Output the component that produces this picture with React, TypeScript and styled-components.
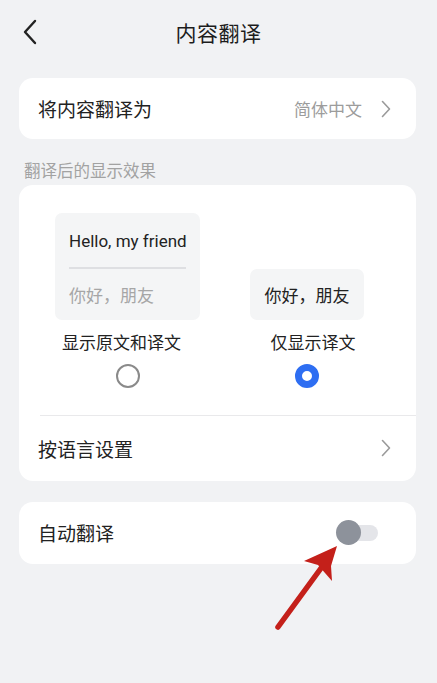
import React from 'react';
import styled, { createGlobalStyle } from 'styled-components';

const GlobalStyle = createGlobalStyle`
  html, body {
    margin: 0;
    padding: 0;
    background: #f1f2f4;
  }
  body {
    font-family: Roboto, "Noto Sans CJK SC", sans-serif;
    color: #222;
  }
`;

export default function App() {
  return (
    <Page>
      <GlobalStyle />
      <Header>
        <BackButton>
          <svg width="16" height="26" viewBox="0 0 16 26">
            <path d="M13 2 L3 13 L13 24" fill="none" stroke="#222" strokeWidth="2.4" strokeLinecap="round" strokeLinejoin="round" />
          </svg>
        </BackButton>
        <Title>内容翻译</Title>
      </Header>

      <Card top={14}>
        <Row height={61}>
          <RowLabel>将内容翻译为</RowLabel>
          <RowRight>
            <RowValue>简体中文</RowValue>
            <Chevron />
          </RowRight>
        </Row>
      </Card>

      <SectionLabel>翻译后的显示效果</SectionLabel>

      <Card top={0}>
        <Options>
          <Option>
            <DualPreview>
              <PreviewLine>Hello, my friend</PreviewLine>
              <PreviewDivider />
              <PreviewLine muted>你好，朋友</PreviewLine>
            </DualPreview>
            <OptionLabel shift={-6}>显示原文和译文</OptionLabel>
            <Radio />
          </Option>
          <Option>
            <SinglePreview>你好，朋友</SinglePreview>
            <OptionLabel shift={6}>仅显示译文</OptionLabel>
            <Radio checked />
          </Option>
        </Options>
        <Divider />
        <Row height={65}>
          <RowLabel>按语言设置</RowLabel>
          <RowRight>
            <Chevron />
          </RowRight>
        </Row>
      </Card>

      <Card top={21}>
        <Row height={62}>
          <RowLabel>自动翻译</RowLabel>
          <Toggle>
            <Knob />
          </Toggle>
        </Row>
      </Card>

      <Annotation width="437" height="683" viewBox="0 0 437 683">
        <line x1="278" y1="627" x2="327" y2="560" stroke="#c4201a" strokeWidth="5.5" strokeLinecap="round" />
        <polygon points="337,546 304,561 318,565 332,581 331,566" fill="#c4201a" />
      </Annotation>
    </Page>
  );
}

function Chevron() {
  return (
    <svg width="12" height="18" viewBox="0 0 12 18">
      <path d="M2.5 1.5 L9.5 9 L2.5 16.5" fill="none" stroke="#9a9a9a" strokeWidth="1.6" strokeLinecap="round" strokeLinejoin="round" />
    </svg>
  );
}

const Page = styled.div`
  position: relative;
  width: 437px;
  height: 683px;
  overflow: hidden;
  background: #f1f2f4;
`;

const Header = styled.div`
  position: relative;
  height: 64px;
  display: flex;
  align-items: center;
  justify-content: center;
`;

const BackButton = styled.div`
  position: absolute;
  left: 22px;
  top: 19px;
  display: flex;
`;

const Title = styled.div`
  font-size: 21px;
  color: #1c1c1c;
  letter-spacing: 0.5px;
`;

const Card = styled.div<{ top: number }>`
  margin: ${p => p.top}px 0 0 19px;
  width: 397px;
  background: #fff;
  border-radius: 14px;
  overflow: hidden;
`;

const Row = styled.div<{ height: number }>`
  height: ${p => p.height}px;
  display: flex;
  align-items: center;
  justify-content: space-between;
  padding: 0 24px 0 19px;
`;

const RowLabel = styled.div`
  font-size: 19px;
  color: #222;
`;

const RowRight = styled.div`
  display: flex;
  align-items: center;
  gap: 18px;
`;

const RowValue = styled.div`
  font-size: 17px;
  color: #9c9c9c;
`;

const SectionLabel = styled.div`
  padding: 22px 0 3px 24px;
  line-height: 21px;
  font-size: 16.5px;
  color: #a2a2a2;
`;

const Options = styled.div`
  display: flex;
  align-items: flex-end;
  padding: 28px 0 27px 36px;
  gap: 50px;
`;

const Option = styled.div`
  display: flex;
  flex-direction: column;
  align-items: center;
`;

const DualPreview = styled.div`
  width: 145px;
  box-sizing: border-box;
  padding: 14px 14px 10px;
  background: #f4f5f6;
  border-radius: 7px;
`;

const PreviewLine = styled.div<{ muted?: boolean }>`
  line-height: 28px;
  font-size: 17px;
  color: ${p => (p.muted ? '#a6a6a6' : '#222')};
  white-space: nowrap;
`;

const PreviewDivider = styled.div`
  height: 1.5px;
  background: #dedfe2;
  margin: 12px 0 13px;
`;

const SinglePreview = styled.div`
  width: 114px;
  height: 51px;
  display: flex;
  align-items: center;
  justify-content: center;
  background: #f4f5f6;
  border-radius: 7px;
  font-size: 17px;
  color: #222;
`;

const OptionLabel = styled.div<{ shift: number }>`
  margin-top: 11px;
  transform: translateX(${p => p.shift}px);
  line-height: 24px;
  font-size: 17px;
  color: #222;
  white-space: nowrap;
`;

const Radio = styled.div<{ checked?: boolean }>`
  margin-top: 9px;
  width: 24px;
  height: 24px;
  box-sizing: border-box;
  border-radius: 50%;
  border: ${p => (p.checked ? '7px solid #2e6ef2' : '2px solid #8a8a8a')};
  background: #fff;
`;

const Divider = styled.div`
  height: 1px;
  margin-left: 21px;
  background: #e9e9eb;
`;

const Toggle = styled.div`
  position: relative;
  width: 41px;
  height: 16px;
  margin-right: 14px;
  border-radius: 8px;
  background: #e4e5e9;
`;

const Knob = styled.div`
  position: absolute;
  left: -1px;
  top: -4.5px;
  width: 25px;
  height: 25px;
  border-radius: 50%;
  background: #8d929b;
`;

const Annotation = styled.svg`
  position: absolute;
  left: 0;
  top: 0;
  pointer-events: none;
`;
